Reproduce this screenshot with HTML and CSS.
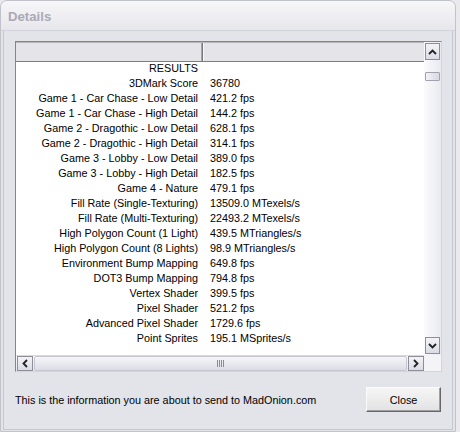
FILE: index.html
```html
<!DOCTYPE html>
<html>
<head>
<meta charset="utf-8">
<link rel="stylesheet" href="styles.css">
</head>
<body>
<div class="window">
  <div class="titlebar">Details</div>
  <div class="frame">
    <div class="listbox">
      <div class="main">
        <div class="header">
          <div class="hcell left"></div>
          <div class="hcell right"></div>
        </div>
        <div class="rows">
          <div class="row"><span class="label">RESULTS</span><span class="value"></span></div>
          <div class="row"><span class="label">3DMark Score</span><span class="value">36780</span></div>
          <div class="row"><span class="label">Game 1 - Car Chase - Low Detail</span><span class="value">421.2 fps</span></div>
          <div class="row"><span class="label">Game 1 - Car Chase - High Detail</span><span class="value">144.2 fps</span></div>
          <div class="row"><span class="label">Game 2 - Dragothic - Low Detail</span><span class="value">628.1 fps</span></div>
          <div class="row"><span class="label">Game 2 - Dragothic - High Detail</span><span class="value">314.1 fps</span></div>
          <div class="row"><span class="label">Game 3 - Lobby - Low Detail</span><span class="value">389.0 fps</span></div>
          <div class="row"><span class="label">Game 3 - Lobby - High Detail</span><span class="value">182.5 fps</span></div>
          <div class="row"><span class="label">Game 4 - Nature</span><span class="value">479.1 fps</span></div>
          <div class="row"><span class="label">Fill Rate (Single-Texturing)</span><span class="value">13509.0 MTexels/s</span></div>
          <div class="row"><span class="label">Fill Rate (Multi-Texturing)</span><span class="value">22493.2 MTexels/s</span></div>
          <div class="row"><span class="label">High Polygon Count (1 Light)</span><span class="value">439.5 MTriangles/s</span></div>
          <div class="row"><span class="label">High Polygon Count (8 Lights)</span><span class="value">98.9 MTriangles/s</span></div>
          <div class="row"><span class="label">Environment Bump Mapping</span><span class="value">649.8 fps</span></div>
          <div class="row"><span class="label">DOT3 Bump Mapping</span><span class="value">794.8 fps</span></div>
          <div class="row"><span class="label">Vertex Shader</span><span class="value">399.5 fps</span></div>
          <div class="row"><span class="label">Pixel Shader</span><span class="value">521.2 fps</span></div>
          <div class="row"><span class="label">Advanced Pixel Shader</span><span class="value">1729.6 fps</span></div>
          <div class="row"><span class="label">Point Sprites</span><span class="value">195.1 MSprites/s</span></div>
        </div>
      </div>
      <div class="vscroll">
        <div class="sbtn up"><svg width="9" height="6" viewBox="0 0 9 6"><path d="M1 5 L4.5 1.5 L8 5" fill="none" stroke="#222" stroke-width="1.8"/></svg></div>
        <div class="vtrack"><div class="vthumb"></div></div>
        <div class="sbtn down"><svg width="9" height="6" viewBox="0 0 9 6"><path d="M1 1 L4.5 4.5 L8 1" fill="none" stroke="#222" stroke-width="1.8"/></svg></div>
      </div>
      <div class="hscroll">
        <div class="sbtn left"><svg width="6" height="9" viewBox="0 0 6 9"><path d="M5 1 L1.5 4.5 L5 8" fill="none" stroke="#222" stroke-width="1.8"/></svg></div>
        <div class="hthumb"><span class="grip"></span></div>
        <div class="sbtn right"><svg width="6" height="9" viewBox="0 0 6 9"><path d="M1 1 L4.5 4.5 L1 8" fill="none" stroke="#222" stroke-width="1.8"/></svg></div>
      </div>
      <div class="corner"></div>
    </div>
    <div class="footer">
      <span class="info">This is the information you are about to send to MadOnion.com</span>
      <button class="close">Close</button>
    </div>
  </div>
</div>
</body>
</html>
```
FILE: styles.css
```css
html, body {
  margin: 0;
  padding: 0;
  background: #e9e9ee;
}
body {
  width: 460px;
  height: 432px;
  overflow: hidden;
  font-family: "Liberation Sans", Arial, sans-serif;
  font-size: 10.8px;
  color: #000;
}
.window {
  width: 454px;
  height: 430px;
  border: 1px solid #c2c2ca;
  border-radius: 7px 7px 0 0;
  background: #e3e3ea;
  display: flex;
  flex-direction: column;
}
.titlebar {
  height: 29px;
  flex: none;
  border-bottom: 1px solid #d2d2da;
  border-radius: 6px 6px 0 0;
  background: linear-gradient(#f7f7f9, #e6e6ec);
  padding-left: 7px;
  font-weight: bold;
  font-size: 13.2px;
  line-height: 32px;
  color: #aaaab6;
}
.frame {
  flex: 1;
  margin: 0 2px 1px 2px;
  border: 1px solid #c6c6ce;
  border-top: none;
  padding: 10px 11px 0 11px;
  display: flex;
  flex-direction: column;
}
.listbox {
  width: 425px;
  height: 329px;
  border: 1px solid #858585;
  border-right-color: #d4d4dc;
  border-bottom-color: #d4d4dc;
  background: #fff;
  display: grid;
  grid-template-columns: 1fr 17px;
  grid-template-rows: 1fr 16px;
}
.main {
  overflow: hidden;
  display: flex;
  flex-direction: column;
}
.header {
  height: 18px;
  flex: none;
  display: flex;
  border-top: 1px solid #b8b8b8;
  border-bottom: 1px solid #7d7d7d;
  background: #e5e5e9;
}
.hcell.left {
  width: 186px;
  border-right: 1px solid #777;
  box-shadow: inset -1px 0 0 #a8a8a8;
}
.hcell.right {
  flex: 1;
  border-left: 1px solid #f8f8f8;
}
.rows {
  display: flex;
  flex-direction: column;
  margin-top: -1px;
}
.row {
  height: 15px;
  line-height: 15px;
  display: flex;
  white-space: nowrap;
}
.label {
  width: 182px;
  flex: none;
  text-align: right;
  padding-right: 5px;
}
.value {
  padding-left: 7px;
}
.vscroll {
  display: flex;
  flex-direction: column;
  background: linear-gradient(90deg, #fbfbfd, #e9e9f1);
  padding: 1px 1px 1px 1px;
}
.sbtn {
  box-sizing: border-box;
  border: 1px solid #8e8e98;
  background: linear-gradient(#f3f3f7, #dcdce6);
  display: flex;
  align-items: center;
  justify-content: center;
  flex: none;
}
.sbtn.up, .sbtn.down {
  width: 15px;
  height: 17px;
}
.vtrack {
  flex: 1;
  padding-top: 12px;
}
.vthumb {
  width: 15px;
  height: 9px;
  box-sizing: border-box;
  border: 1px solid #a2a2ac;
  border-radius: 1px;
  background: linear-gradient(90deg, #f2f2f6, #d8d8e2);
}
.hscroll {
  display: flex;
  align-items: center;
  padding: 0 0 0 1px;
  background: linear-gradient(#fbfbfd, #e6e6ee);
  border-top: 1px solid #d8d8e0;
}
.sbtn.left, .sbtn.right {
  width: 16px;
  height: 15px;
}
.hthumb {
  flex: 1;
  height: 13px;
  margin: 0 1px;
  border: 1px solid #c6c6d0;
  border-radius: 2px;
  background: linear-gradient(#f6f6f9, #dcdce6);
  display: flex;
  align-items: center;
  justify-content: center;
}
.grip {
  width: 7px;
  height: 7px;
  background: repeating-linear-gradient(90deg, #8a8a94 0 1px, transparent 1px 2px);
}
.corner {
  background: #f4f4f8;
}
.footer {
  margin-top: 15px;
  display: flex;
  align-items: center;
  justify-content: space-between;
}
.info {
  padding-left: 0;
}
.close {
  width: 75px;
  height: 25px;
  font-family: "Liberation Sans", Arial, sans-serif;
  font-size: 10.8px;
  color: #000;
  background: linear-gradient(#f6f6f6, #e2e2e4);
  border: 1px solid;
  border-color: #fafafa #666 #666 #fafafa;
  box-shadow: inset -1px -1px 0 #a0a0a0;
  padding: 0;
  margin-right: 0;
}
```
